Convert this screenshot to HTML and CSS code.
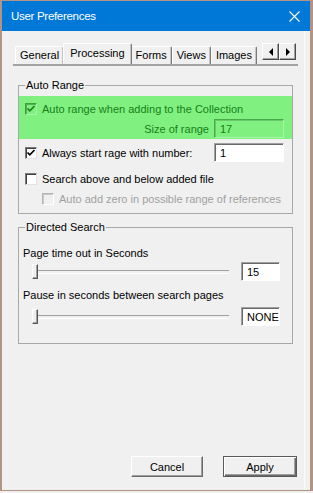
FILE: index.html
```html
<!DOCTYPE html>
<html lang="en">
<head>
    <meta charset="UTF-8">
    <meta name="viewport" content="width=device-width, initial-scale=1.0">
    <title>User Preferences</title>
    <link rel="stylesheet" href="styles.css">
</head>
<body>

    <div class="window">
        <div class="titlebar">
            <span class="title">User Preferences</span>
            <svg class="close" width="11" height="11" viewBox="0 0 11 11">
                <path d="M0.5 0.5L10.5 10.5M10.5 0.5L0.5 10.5" stroke="#fff" stroke-width="1.1" fill="none"/>
            </svg>
        </div>

        <div class="client">
            <div class="tabstrip">
                <div class="tab">General</div>
                <div class="tab active">Processing</div>
                <div class="tab">Forms</div>
                <div class="tab">Views</div>
                <div class="tab">Images</div>
                <div class="tab-scroll">
                    <span class="arrow-btn"><span class="tri-left"></span></span>
                    <span class="arrow-btn"><span class="tri-right"></span></span>
                </div>
            </div>

            <fieldset class="group auto-range">
                <legend>Auto Range</legend>
                <div class="highlight">
                    <div class="row check-row">
                        <span class="checkbox green">
                            <svg width="10" height="10" viewBox="0 0 10 10"><path d="M1.5 4.5L3.8 6.8L8.5 2" fill="none" stroke="currentColor" stroke-width="1.7"/></svg>
                        </span>
                        Auto range when adding to the Collection
                    </div>
                    <div class="row field-row size-row">
                        <span>Size of range</span>
                        <span class="field green-field">17</span>
                    </div>
                </div>
                <div class="row field-row start-row">
                    <span class="row">
                        <span class="checkbox">
                            <svg width="10" height="10" viewBox="0 0 10 10"><path d="M1.5 4.5L3.8 6.8L8.5 2" fill="none" stroke="currentColor" stroke-width="1.7"/></svg>
                        </span>
                        Always start rage with number:
                    </span>
                    <span class="field">1</span>
                </div>
                <div class="row check-row search-row">
                    <span class="checkbox"></span>
                    Search above and below added file
                </div>
                <div class="row check-row zero-row disabled">
                    <span class="checkbox"></span>
                    Auto add zero in possible range of references
                </div>
            </fieldset>

            <fieldset class="group directed">
                <legend>Directed Search</legend>
                <div class="label-row first">Page time out in Seconds</div>
                <div class="row slider-row">
                    <div class="slider"><span class="thumb"></span></div>
                    <span class="field small-field">15</span>
                </div>
                <div class="label-row">Pause in seconds between search pages</div>
                <div class="row slider-row last">
                    <div class="slider"><span class="thumb"></span></div>
                    <span class="field small-field">NONE</span>
                </div>
            </fieldset>

            <div class="buttons">
                <button class="btn cancel">Cancel</button>
                <button class="btn apply">Apply</button>
            </div>
        </div>
    </div>

</body>
</html>
```

FILE: styles.css
```css
* {
    box-sizing: border-box;
}

html {
    background: #f0f0f0;
}

body {
    margin: 0;
    font-family: 'Liberation Sans', Arial, sans-serif;
    font-size: 11px;
    color: #000;
}

.window {
    height: 491px;
    display: flex;
    flex-direction: column;
    border: 1px solid #b39385;
    border-left-width: 2px;
    border-right-width: 3px;
}

.titlebar {
    height: 30px;
    flex-shrink: 0;
    background: #0078d7;
    color: #fff;
    display: flex;
    align-items: center;
    justify-content: space-between;
    padding: 0 10px 0 9px;
}

.title {
    font-size: 11.5px;
    letter-spacing: -0.3px;
}

.client {
    flex: 1;
    display: flex;
    flex-direction: column;
    background: #f0f0f0;
    box-shadow: inset -5px 0 0 #f0f0f0, inset -6px 0 0 #fbfbfb;
}

/* tabs */
.tabstrip {
    display: flex;
    align-items: flex-end;
    height: 23px;
    margin: 12px 12px 0 11px;
    padding-left: 2px;
    border-bottom: 2px solid #a3a3a3;
}

.tab {
    height: 18px;
    line-height: 17px;
    padding: 0 4px;
    border-top: 1px solid #fff;
    border-left: 1px solid #fff;
    border-right: 1px solid #7a7a7a;
    border-radius: 2px 2px 0 0;
    box-shadow: inset -1px 0 0 #c4c4c4;
}

.tab.active {
    height: 21px;
    line-height: 18px;
    margin: 0 -1px 0 -1px;
    padding: 0 6px;
    position: relative;
    z-index: 1;
    background: #f0f0f0;
}

.tab-scroll {
    display: flex;
    align-self: flex-start;
    margin-left: auto;
    margin-right: 2px;
}

.arrow-btn {
    width: 17px;
    height: 17px;
    display: flex;
    align-items: center;
    justify-content: center;
    border: 1px solid;
    border-color: #fff #4a4a4a #4a4a4a #fff;
    box-shadow: inset -1px -1px 0 #a0a0a0;
}

.tri-left {
    border-style: solid;
    border-width: 4px 4px 4px 0;
    border-color: transparent #000 transparent transparent;
}

.tri-right {
    border-style: solid;
    border-width: 4px 0 4px 4px;
    border-color: transparent transparent transparent #000;
}

/* group boxes */
.group {
    width: 275px;
    min-width: 0;
    margin: 13px 0 0 16px;
    padding: 0 0 8px;
    border: 1px solid #a8a8a8;
}

.group legend {
    margin-left: 6px;
    padding: 0 1px;
    line-height: 13px;
}

.row {
    display: flex;
    align-items: center;
}

.check-row {
    height: 13px;
    padding-left: 6px;
}

.field-row {
    height: 19px;
    justify-content: space-between;
    padding: 0 8px 0 6px;
}

.highlight {
    margin-top: 4px;
    padding: 6px 0 1px;
    background: #80f080;
    color: #17801a;
}

.size-row {
    margin-top: 4px;
    justify-content: flex-end;
    gap: 5px;
}

.start-row {
    margin-top: 4px;
}

.search-row {
    margin-top: 10px;
}

.zero-row {
    margin-top: 7px;
    padding-left: 23px;
}

.disabled {
    color: #a0a0a0;
}

.checkbox {
    width: 12px;
    height: 12px;
    margin-right: 5px;
    display: flex;
    align-items: center;
    justify-content: center;
    background: #fff;
    border: 1px solid;
    border-color: #7a7a7a #e3e3e3 #e3e3e3 #7a7a7a;
    box-shadow: inset 1px 1px 0 #404040;
    color: #000;
}

.checkbox.green {
    background: #80f080;
    border-color: #3f9f3f #a8f5a8 #a8f5a8 #3f9f3f;
    box-shadow: inset 1px 1px 0 #55b055;
    color: #17801a;
}

.disabled .checkbox {
    background: #f0f0f0;
    border-color: #b4b4b4 #fff #fff #b4b4b4;
    box-shadow: inset 1px 1px 0 #c8c8c8;
}

.field {
    width: 70px;
    height: 19px;
    display: flex;
    align-items: center;
    padding-left: 5px;
    background: #fff;
    border: 1px solid;
    border-color: #a0a0a0 #fff #fff #a0a0a0;
    box-shadow: inset 1px 1px 0 #696969;
    color: #000;
}

.green-field {
    background: #80f080;
    border-color: #4aa84a #a8f5a8 #a8f5a8 #4aa84a;
    box-shadow: inset 1px 1px 0 #6cc86c;
    color: #17801a;
}

.small-field {
    width: 39px;
    padding-left: 5px;
    margin-left: auto;
}

/* directed search */
.directed {
    margin-top: 7px;
    padding-bottom: 17px;
}

.label-row {
    height: 13px;
    line-height: 13px;
    padding-left: 4px;
    margin-top: 8px;
}

.label-row.first {
    margin-top: 13px;
}

.slider-row {
    height: 19px;
    margin-top: 2px;
    padding: 0 12px 0 13px;
}

.slider-row.last {
    margin-top: 5px;
}

.slider {
    position: relative;
    width: 197px;
    height: 19px;
}

.slider::before {
    content: "";
    position: absolute;
    left: 0;
    right: 0;
    top: 8px;
    height: 2px;
    border-top: 1px solid #a0a0a0;
    border-bottom: 1px solid #fff;
}

.thumb {
    position: absolute;
    left: 0;
    top: 2px;
    width: 6px;
    height: 15px;
    background: #f0f0f0;
    border: 1px solid;
    border-color: #fff #555 #555 #fff;
    box-shadow: inset -1px -1px 0 #a0a0a0;
}

/* buttons */
.buttons {
    margin-top: auto;
    display: flex;
    justify-content: flex-end;
    gap: 20px;
    padding: 0 13px 13px 0;
}

.btn {
    height: 21px;
    width: 72px;
    padding: 0;
    font: inherit;
    color: #000;
    background: #f0f0f0;
    border: 1px solid;
    border-color: #fff #696969 #696969 #fff;
    box-shadow: inset -1px -1px 0 #a0a0a0;
}

.btn.apply {
    width: 74px;
    border: 1px solid #5a5a5a;
    box-shadow: inset 1px 1px 0 #fff, inset -1px -1px 0 #696969, inset -2px -2px 0 #a0a0a0;
}
```
